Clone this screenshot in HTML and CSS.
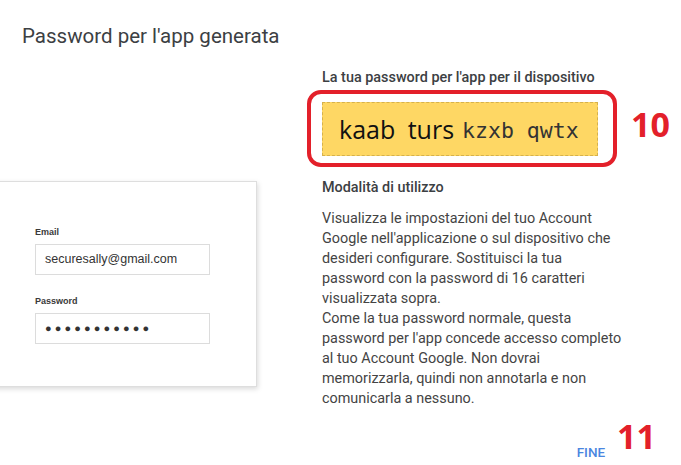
FILE: index.html
```html
<!DOCTYPE html>
<html lang="it">
<head>
    <meta charset="UTF-8">
    <meta name="viewport" content="width=device-width, initial-scale=1.0">
    <title>Password per l'app generata</title>
    <link rel="stylesheet" href="styles.css">
</head>
<body>
    <h1 class="title">Password per l'app generata</h1>
    <div class="main">
        <div class="left">
            <div class="card">
                <label class="field-label">Email</label>
                <div class="field">securesally@gmail.com</div>
                <label class="field-label">Password</label>
                <div class="field dots">●●●●●●●●●●●</div>
            </div>
        </div>
        <div class="right">
            <div class="label">La tua password per l'app per il dispositivo</div>
            <div class="pw-row">
                <div class="frame">
                    <div class="pw-box">
                        <span class="pw-sans">kaab turs</span>
                        <span class="pw-mono">kzxb qwtx</span>
                    </div>
                </div>
                <span class="step">10</span>
            </div>
            <div class="label usage">Modalità di utilizzo</div>
            <p class="text">Visualizza le impostazioni del tuo Account Google nell'applicazione o sul dispositivo che desideri configurare. Sostituisci la tua password con la password di 16 caratteri visualizzata sopra.<br>Come la tua password normale, questa password per l'app concede accesso completo al tuo Account Google. Non dovrai memorizzarla, quindi non annotarla e non comunicarla a nessuno.</p>
            <div class="actions">
                <button class="done">FINE</button>
                <span class="step step-last">11</span>
            </div>
        </div>
    </div>
</body>
</html>
```

FILE: styles.css
```css
body {
    margin: 0;
    background: #fff;
    font-family: Roboto, "Liberation Sans", Arial, sans-serif;
    color: #3c4043;
    overflow: hidden;
}
.title {
    margin: 0;
    padding: 24px 22px 0;
    font-size: 20.5px;
    line-height: 24px;
    font-weight: 400;
    color: #3c4043;
}
.main {
    display: flex;
}
.left {
    width: 257px;
    padding-top: 133px;
}
.card {
    margin-left: -10px;
    height: 206px;
    box-sizing: border-box;
    padding: 44px 0 0 44px;
    background: #fff;
    border: 1px solid #dedede;
    box-shadow: 1px 2px 5px rgba(0, 0, 0, 0.15);
    font-family: "Liberation Sans", Arial, sans-serif;
}
.field-label {
    display: block;
    font-size: 9px;
    font-weight: bold;
    color: #3a3a3a;
    line-height: 12px;
    margin-bottom: 6px;
}
.field {
    width: 175px;
    height: 31px;
    box-sizing: border-box;
    border: 1px solid #dcdcdc;
    padding: 0 9px;
    font-size: 12.5px;
    line-height: 29px;
    color: #333;
    margin-bottom: 20px;
}
.dots {
    font-size: 11px;
    letter-spacing: 3.1px;
    color: #333;
}
.right {
    margin-left: 65px;
    flex: 1;
    padding-top: 21px;
}
.label {
    font-size: 14.4px;
    font-weight: 500;
    line-height: 17px;
    color: #3c4043;
}
.pw-row {
    display: flex;
    align-items: center;
    margin: 4px 0 0 -15px;
}
.frame {
    border: 4px solid #e3202a;
    border-radius: 14px;
    padding: 8px 15px 7px 11px;
}
.pw-box {
    width: 276px;
    height: 54px;
    box-sizing: border-box;
    background: #fed764;
    border: 1px dashed #d6b14c;
    display: flex;
    align-items: center;
    padding-left: 16px;
    color: #111;
}
.pw-sans {
    font-family: "Open Sans", sans-serif;
    font-size: 25px;
    word-spacing: 6px;
    margin-right: 8px;
}
.pw-mono {
    font-family: "DejaVu Sans Mono", monospace;
    font-size: 21.5px;
    color: #333;
    padding-top: 3px;
}
.step {
    font-family: "Open Sans", "Liberation Sans", sans-serif;
    font-weight: 700;
    font-size: 34px;
    color: #e3202a;
    line-height: 34px;
    margin: 0 0 10px 14px;
}
.usage {
    margin-top: 12px;
}
.text {
    margin: 13px 0 0;
    width: 302px;
    font-size: 14.4px;
    line-height: 20px;
    color: #444;
}
.actions {
    display: flex;
    justify-content: flex-end;
    align-items: flex-end;
    padding-right: 25px;
    margin-top: 10px;
}
.done {
    background: none;
    border: none;
    padding: 0;
    font-family: Roboto, sans-serif;
    font-weight: 500;
    font-size: 13.5px;
    color: #4a86e0;
    line-height: 14px;
    margin-bottom: 2px;
}
.step-last {
    margin: 0 0 8px 12px;
}
```
